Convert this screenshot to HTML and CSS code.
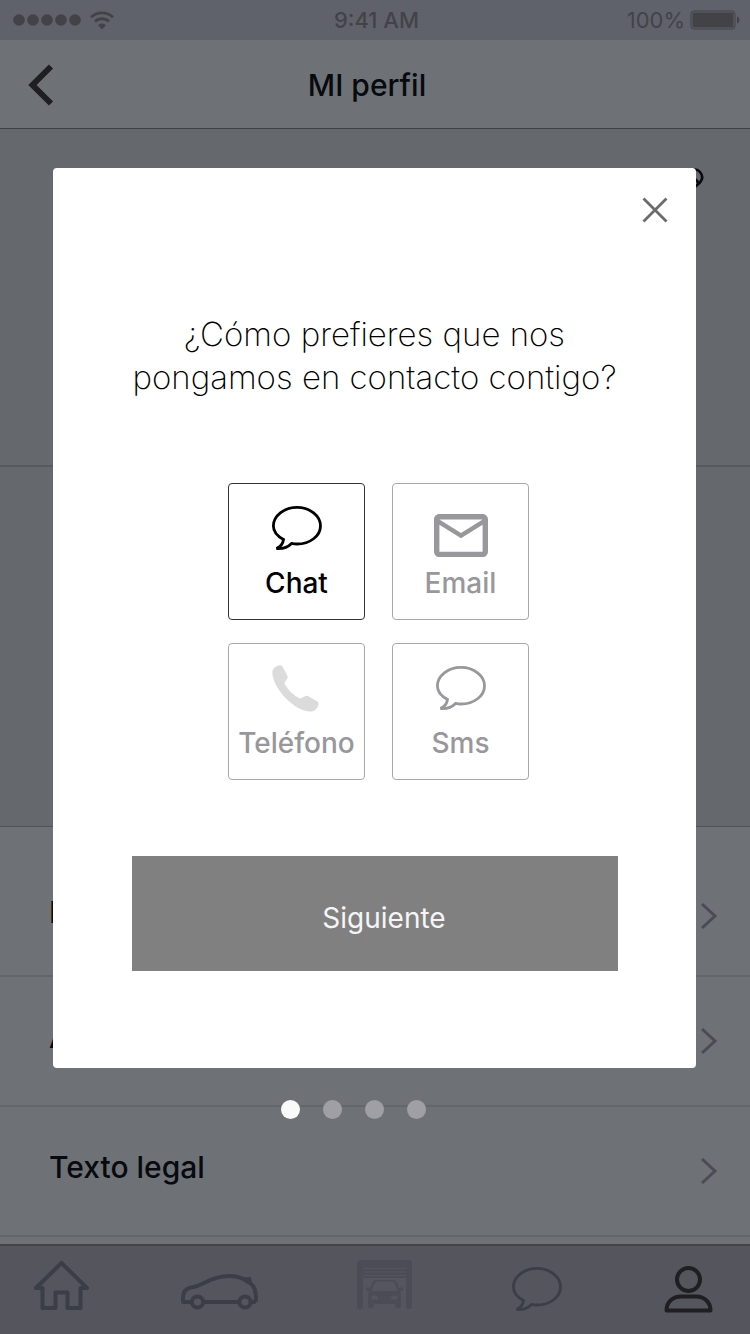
FILE: index.html
```html
<!DOCTYPE html>
<html lang="es">
<head>
  <meta charset="utf-8">
  <meta name="viewport" content="width=device-width, initial-scale=1">
  <title>MI perfil</title>
  <link rel="stylesheet" href="styles.css">
</head>
<body>
  <div class="screen">
    <!-- Status bar -->
    <div class="status-bar">
      <div class="signal">
        <svg width="68" height="12" viewBox="0 0 68 12" fill="currentColor">
          <circle cx="6" cy="6" r="5.8"/>
          <circle cx="20" cy="6" r="5.8"/>
          <circle cx="34" cy="6" r="5.8"/>
          <circle cx="48" cy="6" r="5.8"/>
          <circle cx="62" cy="6" r="5.8"/>
        </svg>
        <svg width="24" height="19" viewBox="0 0 24 19" fill="none" stroke="currentColor" stroke-width="2.8">
          <path d="M1 6.2C7 .3 17 .3 23 6.2"/>
          <path d="M5 10.6C9 6.8 15 6.8 19 10.6"/>
          <path d="M8 14.2C10.4 12 13.6 12 16 14.2L12 18.4Z" fill="currentColor" stroke="none"/>
        </svg>
      </div>
      <div class="clock">9:41 AM</div>
      <div class="battery">
        <span>100%</span>
        <svg width="50" height="20" viewBox="0 0 50 20">
          <rect x="1" y="1" width="44" height="18" rx="3" fill="none" stroke="currentColor"/>
          <rect x="2.5" y="2.5" width="41" height="15" rx="1" fill="currentColor"/>
          <path d="M47 6.5C50.3 7.5 50.3 12.5 47 13.5Z" fill="currentColor"/>
        </svg>
      </div>
    </div>

    <!-- Header -->
    <header class="header">
      <button class="back" aria-label="Atrás">
        <svg width="26" height="42" viewBox="0 0 26 42" fill="none" stroke="currentColor" stroke-width="6">
          <path d="M23 2.5L4.5 21L23 39.5"/>
        </svg>
      </button>
      <h1>MI perfil</h1>
    </header>

    <main class="profile">
      <section class="panel panel-photo">
        <button class="edit" aria-label="Editar">
          <svg width="32" height="32" viewBox="0 0 32 32" fill="none" stroke="currentColor" stroke-width="2.6">
            <path d="M18 5C21 .5 25 .5 28 4C31 7.5 31 11 28 14.5L10 30L2 31L3 22Z"/>
            <path d="M18 6L27 15"/>
          </svg>
        </button>
      </section>
      <section class="panel panel-data"></section>

      <nav class="options">
        <a class="option option-first" href="#">
          <span>I</span>
          <svg class="chevron" viewBox="0 0 18 28"><path d="M2 2L15 14L2 26"/></svg>
        </a>
        <a class="option" href="#">
          <span>A</span>
          <svg class="chevron" viewBox="0 0 18 28"><path d="M2 2L15 14L2 26"/></svg>
        </a>
        <a class="option" href="#">
          <span>Texto legal</span>
          <svg class="chevron" viewBox="0 0 18 28"><path d="M2 2L15 14L2 26"/></svg>
        </a>
      </nav>
    </main>

    <!-- Tab bar -->
    <nav class="tab-bar">
      <a href="#" aria-label="Inicio">
        <svg width="56" height="62" viewBox="0 0 56 62" fill="none" stroke="currentColor" stroke-width="4" stroke-linejoin="round">
          <path d="M27.5 4L2 29H8.5V49H21.500V33.500H33.500V49H46.500V29H53Z"/>
        </svg>
      </a>
      <a href="#" aria-label="Coche">
        <svg width="80" height="62" viewBox="21 -2 80 62" fill="none" stroke="currentColor" stroke-width="4" stroke-linejoin="round">
          <path d="M31 41H23V37C23 31 26 27.5 31 26.5C36 26 40 24 45 21.5C53 17.5 61 15 69 15C76 15 82 16.5 87 20.5C95 24 96 30 96 39L94 41H92M44 41H78"/>
          <path d="M84 17.5L90 17L91 21Z" fill="currentColor" stroke-width="2"/>
          <circle cx="37.5" cy="41" r="5.6"/>
          <circle cx="85" cy="41" r="5.6"/>
        </svg>
      </a>
      <a class="tab-garage" href="#" aria-label="Garaje">
        <svg width="56" height="62" viewBox="0 0 56 62" fill="currentColor">
          <path d="M0 5Q0 1 4 1H51Q55 1 55 5V47Q55 50 52 50T49 47V19H6V47Q6 50 3 50T0 47Z"/>
          <path class="slats" d="M6 9.500H49M6 13H49M6 16.500H49"/>
          <path fill-rule="evenodd" d="M19 21H36Q39 21 40 24L42 29Q46 27 46 30.500Q46 32 43 32.500L44 35V47Q44 49 41 49T38 47V45H17V47Q17 49 14 49T11 47V35L12 32.500Q9 32 9 30.500Q9 27 13 29L15 24Q16 21 19 21ZM19.500 22.500L17 25L14.500 32H40.500L38 25L36 22.500ZM14.500 36.500V40.500H21.500L20 36.500ZM40.500 36.500H35L33.500 40.500H40.500Z"/>
        </svg>
      </a>
      <a href="#" aria-label="Chat">
        <svg width="50" height="46" viewBox="0 0 50 46" fill="none" stroke="currentColor" stroke-width="2.8">
          <path d="M11.5 33.5C5 30 1.4 25.5 1.4 20C1.4 10 12 1.4 25 1.4S48.5 10 48.5 20S38 38 25 38C23 38 21.5 37.8 19.5 37.4C16 41 11 43 4.5 42.5C9 40.5 11 37.5 11.5 33.5Z"/>
        </svg>
      </a>
      <a class="tab-active" href="#" aria-label="MI perfil">
        <svg width="50" height="48" viewBox="0 0 50 48" fill="none" stroke="currentColor" stroke-width="4" stroke-linejoin="round">
          <circle cx="24.5" cy="13.5" r="11.5"/>
          <path d="M2.5 44.5C2.500 36 9 30.500 17 30.500H32C40 30.500 46.500 36 46.500 44.500Z"/>
        </svg>
      </a>
    </nav>
  </div>

  <!-- Contact dialog -->
  <div class="overlay">
    <div class="dialog" role="dialog" aria-modal="true" aria-labelledby="question">
      <button class="close" aria-label="Cerrar">
        <svg width="26" height="26" viewBox="0 0 26 26" fill="none" stroke="currentColor" stroke-width="2.8">
          <path d="M1.5 1.5L24.5 24.5M24.5 1.5L1.5 24.5"/>
        </svg>
      </button>
      <h2 id="question">¿Cómo prefieres que nos<br>pongamos en contacto contigo?</h2>

      <div class="channels">
        <button class="channel selected" aria-pressed="true">
          <svg viewBox="0 0 54 52" fill="none" stroke="currentColor" stroke-width="2.8">
            <path transform="translate(2 1)" d="M11.5 33.5C5 30 1.4 25.5 1.4 20C1.4 10 12 1.4 25 1.4S48.5 10 48.5 20S38 38 25 38C23 38 21.5 37.8 19.5 37.4C16 41 11 43 4.5 42.5C9 40.5 11 37.5 11.5 33.5Z"/>
          </svg>
          <span>Chat</span>
        </button>
        <button class="channel" aria-pressed="false">
          <svg viewBox="0 0 54 52" fill="currentColor">
            <path transform="translate(-5.4 -1.8) scale(2.7)" d="M22 6c0-1.1-.9-2-2-2H4c-1.1 0-2 .9-2 2v12c0 1.1.9 2 2 2h16c1.1 0 2-.9 2-2V6zm-2 0l-8 5-8-5h16zm0 12H4V8l8 5 8-5v10z"/>
          </svg>
          <span>Email</span>
        </button>
        <button class="channel" aria-pressed="false">
          <svg class="phone" viewBox="0 0 54 52" fill="currentColor">
            <path transform="translate(2 0)" d="M.5 6C1 2 8-1.500 10 1L15.500 11C16.500 13.500 13 15.500 12.500 18.500C15 24 22 31 28 33.500C31 33 33 29.500 36 31L45.500 36.500C48 38.500 45 45.500 40 46.500C24 48.500-1.500 22 .5 6Z"/>
          </svg>
          <span>Teléfono</span>
        </button>
        <button class="channel" aria-pressed="false">
          <svg viewBox="0 0 54 52" fill="none" stroke="currentColor" stroke-width="2.8">
            <path transform="translate(2 1)" d="M11.5 33.5C5 30 1.4 25.5 1.4 20C1.4 10 12 1.4 25 1.4S48.5 10 48.5 20S38 38 25 38C23 38 21.5 37.8 19.5 37.4C16 41 11 43 4.5 42.5C9 40.5 11 37.5 11.5 33.5Z"/>
          </svg>
          <span>Sms</span>
        </button>
      </div>

      <button class="next">Siguiente</button>
    </div>

    <div class="steps">
      <span class="step current"></span>
      <span class="step"></span>
      <span class="step"></span>
      <span class="step"></span>
    </div>
  </div>
</body>
</html>
```
FILE: styles.css
```css
* {
  box-sizing: border-box;
}

body {
  margin: 0;
  font-family: Inter, "Liberation Sans", sans-serif;
  color: #070a0f;
  background: #6e7276;
}

button {
  font: inherit;
  color: inherit;
  background: none;
  border: 0;
  padding: 0;
  cursor: pointer;
}

a {
  color: inherit;
  text-decoration: none;
}

svg {
  display: block;
}

.screen {
  min-height: 100vh;
  display: flex;
  flex-direction: column;
}

/* Status bar */
.status-bar {
  display: grid;
  grid-template-columns: 1fr auto 1fr;
  align-items: center;
  height: 40px;
  padding: 0 10px 0 13px;
  font-size: 22px;
  color: #434347;
  background: #5f626a;
}

.signal {
  display: flex;
  align-items: center;
  gap: 9px;
}

.clock {
  font-weight: 500;
}

.battery {
  display: flex;
  align-items: center;
  justify-content: flex-end;
  gap: 5px;
}

/* Header */
.header {
  display: grid;
  grid-template-columns: 1fr auto 1fr;
  align-items: center;
  height: 89px;
  padding: 2px 44px 0 28px;
  border-bottom: 1px solid #3d4146;
}

.header h1 {
  margin: 0;
  font-size: 30px;
  font-weight: 500;
}

.back {
  justify-self: start;
  color: #1f1f23;
}

/* Profile */
.profile {
  flex: 1;
}

.panel {
  background: #65696d;
}

.panel-photo {
  display: flex;
  justify-content: flex-end;
  align-items: flex-start;
  height: 338px;
  padding: 39px 46px;
  border-bottom: 2px solid #575a5f;
}

.panel-data {
  height: 360px;
  border-bottom: 1px solid #505357;
}

.option {
  display: flex;
  align-items: center;
  justify-content: space-between;
  height: 130px;
  padding: 0 32px 0 49px;
  font-size: 30px;
  font-weight: 500;
  border-bottom: 2px solid #63666b;
}

.option span {
  padding-bottom: 8px;
}

.option-first {
  height: 150px;
  padding-top: 30px;
}

.chevron {
  width: 18px;
  height: 28px;
  fill: none;
  stroke: #4a4b56;
  stroke-width: 3;
}

/* Tab bar */
.tab-bar {
  display: grid;
  grid-template-columns: 147fr 176fr 155fr 152fr 86fr;
  align-items: center;
  height: 90px;
  padding-left: 34px;
  color: #3a3f47;
  background: #55555e;
  border-top: 2px solid #414449;
}

.tab-garage {
  color: #4a4d56;
}

.slats {
  fill: none;
  stroke: #55555e;
  stroke-width: 1;
}

.tab-active {
  color: #1f1f22;
}

/* Dialog */
.overlay {
  position: absolute;
  top: 0;
  left: 0;
  width: 100%;
  padding: 168px 54px 0 53px;
}

.dialog {
  display: flex;
  flex-direction: column;
  align-items: center;
  padding: 29px 28px 97px;
  background: #fff;
  border-radius: 4px;
}

.close {
  align-self: flex-end;
  color: #6a6b6d;
}

.dialog h2 {
  margin: 90px 0 84px;
  font-size: 33px;
  font-weight: 200;
  line-height: 43px;
  text-align: center;
  color: #000;
}

.channels {
  display: grid;
  grid-template-columns: 137px 137px;
  gap: 23px 27px;
  padding-left: 8px;
}

.channel {
  display: flex;
  flex-direction: column;
  align-items: center;
  gap: 8px;
  height: 137px;
  padding-top: 21px;
  font-size: 28px;
  font-weight: 500;
  line-height: 36px;
  color: #98979c;
  border: 1px solid #a9a8ac;
  border-radius: 4px;
}

.channel.selected {
  color: #000;
  border-color: #333;
}

.channel svg {
  width: 54px;
  height: 52px;
}

.channel .phone {
  color: #dbdbdb;
}

.next {
  align-self: stretch;
  height: 115px;
  margin: 76px 50px 0 51px;
  padding: 8px 0 0 18px;
  font-size: 28px;
  color: #f5f5f5;
  background: #808081;
}

/* Step dots */
.steps {
  display: flex;
  justify-content: center;
  gap: 23px;
  padding: 32px 42px 0 0;
}

.step {
  width: 19px;
  height: 19px;
  border-radius: 50%;
  background: #a09fa5;
}

.step.current {
  background: #fafafa;
}
```
